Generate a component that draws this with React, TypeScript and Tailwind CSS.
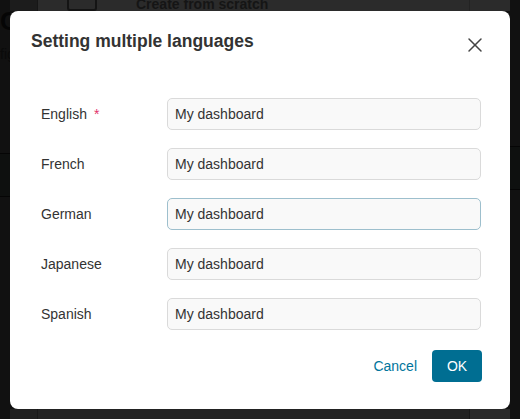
import { X } from "lucide-react";

const languages = [
  { name: "English", required: true, focused: false },
  { name: "French", required: false, focused: false },
  { name: "German", required: false, focused: true },
  { name: "Japanese", required: false, focused: false },
  { name: "Spanish", required: false, focused: false },
];

function BackgroundPage() {
  return (
    <div className="flex h-full w-full bg-[#111111]">
      <div className="w-[10px] shrink-0 flex flex-col">
        <div className="pt-[8px] text-[26px] font-bold leading-none text-[#050505] overflow-hidden">C</div>
        <div className="mt-[10px] text-[14px] text-[#0a0a0a] overflow-hidden">fig</div>
        <div className="mt-[88px] h-[44px] border-y border-[#050505] bg-[#0e100f]" />
      </div>
      <div className="flex-1 flex flex-col">
        <div className="flex h-[11px] overflow-hidden">
          <div className="w-[28px] bg-[#1c1c1c] border-r border-[#161616]" />
          <div className="flex flex-1 items-start bg-[#2b2b2b] border-r border-[#232323]">
            <div className="ml-[29px] -mt-[8px] h-[19px] w-[30px] rounded-[3px] border-2 border-[#141414]" />
            <span className="ml-[39px] -mt-[6px] text-[14px] font-bold text-[#151515] whitespace-nowrap">Create from scratch</span>
          </div>
          <div className="w-[40px] bg-[#2b2b2b]" />
        </div>
        <div className="flex-1 bg-[#111111]" />
        <div className="flex h-[10px]">
          <div className="w-[28px] bg-[#202020] border-r border-[#181818]" />
          <div className="flex-1 bg-[#222222] border-r border-[#181818]" />
          <div className="w-[40px] bg-[#2a2a2a]" />
        </div>
      </div>
      <div className="w-[10px] shrink-0 flex flex-col">
        <div className="mt-[146px] h-[44px] border-y border-[#050505] bg-[#0e100f]" />
      </div>
    </div>
  );
}

export default function App() {
  return (
    <div
      className="relative h-[419px] w-[520px] overflow-hidden"
      style={{ fontFamily: '"Liberation Sans", Arial, sans-serif' }}
    >
      <BackgroundPage />

      <div className="absolute left-[10px] top-[11px] flex h-[398px] w-[500px] flex-col rounded-[8px] bg-white">
        <div className="flex items-start justify-between pl-[21px] pr-[23px] pt-[20px]">
          <h2 className="text-[17.5px] font-bold leading-[21px] text-[#333333]">Setting multiple languages</h2>
          <button className="mt-[2px] text-[#444444]" aria-label="Close">
            <X size={24} strokeWidth={1.5} />
          </button>
        </div>

        <div className="mt-[41px] flex flex-col gap-[18px] pl-[31px] pr-[29px]">
          {languages.map((lang) => (
            <div key={lang.name} className="flex h-[32px] items-center">
              <label className="w-[126px] text-[14px] text-[#333333]">
                {lang.name}
                {lang.required && <span className="ml-[7px] text-[#e2336b]">*</span>}
              </label>
              <input
                readOnly
                value="My dashboard"
                className={`h-[32px] flex-1 rounded-[5px] border bg-[#f9f9f9] px-[7px] text-[14px] text-[#333333] outline-none ${
                  lang.focused ? "border-[#9dbfcd]" : "border-[#dadada]"
                }`}
              />
            </div>
          ))}
        </div>

        <div className="mt-[20px] flex items-center justify-end gap-[15px] pr-[28px]">
          <button className="text-[14px] text-[#00759c]">Cancel</button>
          <button className="h-[32px] w-[50px] rounded-[4px] bg-[#006e92] text-[14px] text-white">OK</button>
        </div>
      </div>
    </div>
  );
}
